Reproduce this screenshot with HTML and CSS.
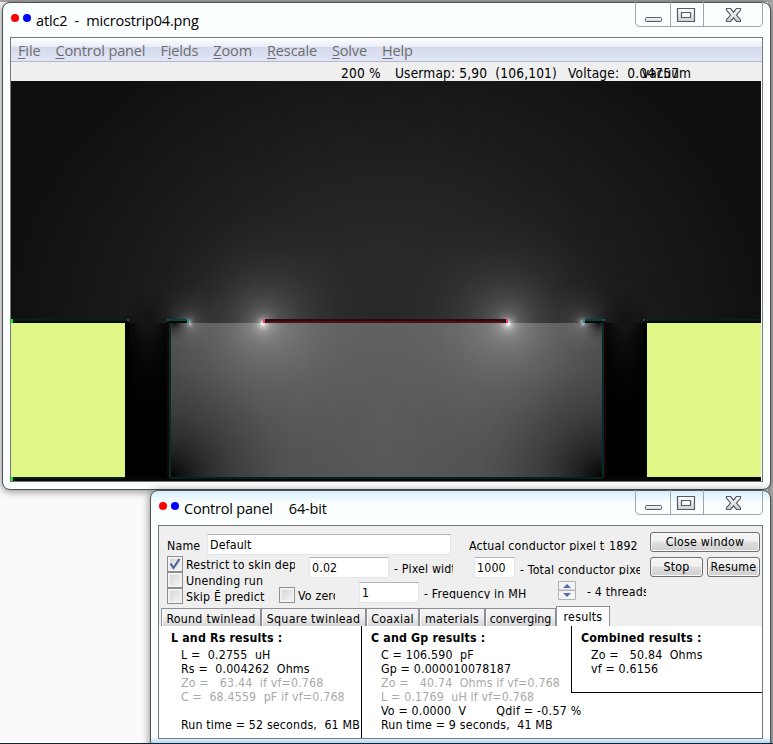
FILE: index.html
```html
<!DOCTYPE html>
<html lang="en">
<head>
<meta charset="utf-8">
<title>atlc2</title>
<link rel="stylesheet" href="styles.css">
</head>
<body>
<svg class="defs" width="0" height="0">
  <defs>
    <linearGradient id="metal" x1="0" y1="0" x2="0" y2="1"><stop offset="0" stop-color="#fff"/><stop offset="1" stop-color="#cfcfd2"/></linearGradient>
    <symbol id="caption" viewBox="0 0 128 25">
      <path d="M.5 0V20Q.5 24.500 5 24.500H123Q127.500 24.500 127.500 20V0M35.500 0V24M68.500 0V24" fill="none" stroke="#a2a5a8"/>
      <rect x="10.500" y="15.500" width="16" height="4" rx="1" fill="url(#metal)" stroke="#565a69"/>
      <path fill-rule="evenodd" d="M42.500 6.500h17v13h-17zM46.500 10.500v5h9v-5z" fill="url(#metal)" stroke="#565a69" stroke-width="1.200"/>
      <path d="M91.500 6.500h4l3 3.700 3-3.700h4v1.500l-4 5 4 5v1.500h-4l-3-3.700-3 3.700h-4v-1.500l4-5-4-5z" fill="url(#metal)" stroke="#565a69" stroke-width="1.200"/>
    </symbol>
  </defs>
</svg>

<section class="window main">
  <header class="titlebar">
    <i class="dot red"></i><i class="dot blue"></i>
    <h1 class="title"><span class="t-app">atlc2  -  microstrip04.png</span></h1>
    <svg class="caption" width="128" height="25"><use href="#caption"/></svg>
  </header>
  <div class="frame">
    <nav class="menu">
      <span><u>F</u>ile</span><span><u>C</u>ontrol panel</span><span>F<u>i</u>elds</span><span><u>Z</u>oom</span><span><u>R</u>escale</span><span><u>S</u>olve</span><span><u>H</u>elp</span>
    </nav>
    <div class="status"><span class="s-zoom">200 %</span><span class="s-map">Usermap: 5,90  (106,101)</span><span class="s-volt">Voltage:  0.04757</span><span class="s-mat">vacuum</span></div>
    <svg class="field" width="750" height="400" viewBox="0 0 750 400">
      <defs>
        <radialGradient id="air" gradientUnits="userSpaceOnUse" cx="375" cy="250" r="390" gradientTransform="translate(375 250) scale(1 .86) translate(-375 -250)">
          <stop offset="0" stop-color="#282828"/><stop offset=".25" stop-color="#282828"/><stop offset=".5" stop-color="#202020"/><stop offset=".75" stop-color="#171717"/><stop offset="1" stop-color="#0f0f0f"/>
        </radialGradient>
        <radialGradient id="glow"><stop offset="0" stop-color="#fff" stop-opacity=".95"/><stop offset=".03" stop-color="#fff" stop-opacity=".55"/><stop offset=".06" stop-color="#fff" stop-opacity=".36"/><stop offset=".1" stop-color="#fff" stop-opacity=".26"/><stop offset=".16" stop-color="#fff" stop-opacity=".19"/><stop offset=".25" stop-color="#fff" stop-opacity=".135"/><stop offset=".37" stop-color="#fff" stop-opacity=".085"/><stop offset=".52" stop-color="#fff" stop-opacity=".045"/><stop offset=".72" stop-color="#fff" stop-opacity=".017"/><stop offset="1" stop-color="#fff" stop-opacity="0"/></radialGradient>
        <radialGradient id="spark"><stop offset="0" stop-color="#fff" stop-opacity=".65"/><stop offset=".08" stop-color="#fff" stop-opacity=".26"/><stop offset=".18" stop-color="#fff" stop-opacity=".13"/><stop offset=".35" stop-color="#fff" stop-opacity=".065"/><stop offset=".6" stop-color="#fff" stop-opacity=".022"/><stop offset="1" stop-color="#fff" stop-opacity="0"/></radialGradient>
        <linearGradient id="sub" x1="0" y1="0" x2="0" y2="1"><stop offset="0" stop-color="#606060"/><stop offset="1" stop-color="#575757"/></linearGradient>
        <linearGradient id="sides"><stop offset="0" stop-opacity=".2"/><stop offset=".3" stop-opacity=".05"/><stop offset=".5" stop-opacity="0"/><stop offset=".7" stop-opacity=".05"/><stop offset="1" stop-opacity=".2"/></linearGradient>
        <radialGradient id="shade"><stop offset="0" stop-opacity=".95"/><stop offset=".07" stop-opacity=".78"/><stop offset=".18" stop-opacity=".57"/><stop offset=".32" stop-opacity=".37"/><stop offset=".5" stop-opacity=".2"/><stop offset=".7" stop-opacity=".09"/><stop offset=".87" stop-opacity=".02"/><stop offset="1" stop-opacity="0"/></radialGradient>
        <radialGradient id="dusk"><stop offset="0" stop-opacity=".4"/><stop offset=".4" stop-opacity=".25"/><stop offset="1" stop-opacity="0"/></radialGradient>
        <linearGradient id="trench" x1="0" y1="0" x2="0" y2="1"><stop offset="0" stop-color="#161616"/><stop offset=".12" stop-color="#0d0d0d"/><stop offset=".3" stop-color="#050505"/><stop offset=".55" stop-color="#000"/></linearGradient>
        <linearGradient id="walls"><stop offset="0" stop-opacity=".7"/><stop offset=".25" stop-opacity=".2"/><stop offset=".5" stop-opacity="0"/><stop offset=".75" stop-opacity=".2"/><stop offset="1" stop-opacity=".7"/></linearGradient>
        <clipPath id="above"><path d="M0 0H750V242H0z"/></clipPath>
        <clipPath id="board"><path d="M160 242H591V396H160z"/></clipPath>
      </defs>
      <rect width="750" height="400"/>
      <rect width="750" height="242" fill="url(#air)"/>
      <g clip-path="url(#above)">
        <circle cx="252" cy="242" r="110" fill="url(#glow)"/><circle cx="497" cy="242" r="110" fill="url(#glow)"/>
        <circle cx="178" cy="241" r="40" fill="url(#spark)"/><circle cx="571" cy="241" r="40" fill="url(#spark)"/>
        <ellipse cx="137" cy="248" rx="30" ry="38" fill="url(#dusk)"/><ellipse cx="613" cy="248" rx="30" ry="38" fill="url(#dusk)"/>
      </g>
      <path d="M118 242H156V396H118zM595 242H632V396H595z" fill="url(#trench)"/>
      <rect x="118" y="242" width="38" height="154" fill="url(#walls)"/><rect x="595" y="242" width="37" height="154" fill="url(#walls)"/>
      <rect x="160" y="242" width="431" height="154" fill="url(#sub)"/>
      <rect x="160" y="242" width="431" height="154" fill="url(#sides)"/>
      <g clip-path="url(#board)">
        <circle cx="252" cy="243" r="135" fill="url(#glow)"/><circle cx="497" cy="243" r="135" fill="url(#glow)"/>
        <circle cx="160" cy="396" r="125" fill="url(#shade)"/><circle cx="591" cy="396" r="125" fill="url(#shade)"/>
        <circle cx="164" cy="242" r="20" fill="url(#shade)"/><circle cx="587" cy="242" r="20" fill="url(#shade)"/>
        <circle cx="179" cy="243" r="30" fill="url(#spark)"/><circle cx="572" cy="243" r="30" fill="url(#spark)"/>
      </g>
      <path d="M0 242H114V396H0zM636 242H750V396H636z" fill="#def787"/>
      <path d="M0 240H118V242H0zM632 240H750V242H632zM158 240H176V242H158zM574 240H592V242H574zM0 396H750V400H0z" fill="#080502"/>
      <path d="M0 238H118V240H0zM632 238H750V240H632zM158 396H592V398H158zM0 396H114V398H0z" fill="#03211f"/>
      <path d="M156 238H176V240H156zM574 238H594V240H574z" fill="#004743"/>
      <path d="M158 242H160V396H158zM591 242H593V396H591z" fill="#032b29"/>
      <path d="M156 240H158V396H156zM593 240H595V396H593z" fill="#180604"/>
      <path d="M116 238H118V240H116zM632 238H634V240H632zM156 238H158V240H156zM592 238H594V240H592z" fill="#155b58"/>
      <path d="M176 238H178V242H176zM572 238H574V242H572z" fill="#159793"/>
      <path d="M0 238H2V242H0zM0 396H2V400H0z" fill="#0f0"/>
      <path d="M254 238H496V240H254z" fill="#2c0b10"/><path d="M254 240H496V242H254z" fill="#50101a"/>
      <path d="M252 238H254V242H252zM495 238H497V242H495z" fill="#ff4145"/>
      <path d="M254 238H256V242H254zM493 238H495V242H493z" fill="#34053c"/>
      <path d="M250 242H252V244H250zM497 242H499V244H497z" fill="#fff"/>
    </svg>
  </div>
</section>

<section class="window control">
  <header class="titlebar">
    <i class="dot red"></i><i class="dot blue"></i>
    <h1 class="title"><span class="t-panel">Control panel</span><span class="t-bit">64-bit</span></h1>
    <svg class="caption" width="128" height="25"><use href="#caption"/></svg>
  </header>
  <div class="frame panel">
    <div class="settings">
      <div class="form">
        <div class="name-row">
          <span class="lb-name">Name</span><span class="input in-name">Default</span>
          <span class="clip lb-actual">Actual conductor pixel total</span><span class="lb-count">1892</span>
        </div>
        <div class="options">
          <div class="checks">
            <div class="check"><i class="box"><svg width="12" height="12"><path d="M1.500 5.500L4.500 10 10.500 1" fill="none" stroke="#4a5f97" stroke-width="2"/></svg></i><span class="lb-skin">Restrict to skin depth</span></div>
            <div class="check"><i class="box"></i><span class="lb-unend">Unending run</span></div>
            <div class="check"><i class="box"></i><span class="lb-skip">Skip Ē predict</span></div>
          </div>
          <div class="values">
            <div class="row-a"><span class="input in-width">0.02</span><span class="clip lb-width">- Pixel width</span><span class="input in-total">1000</span><span class="clip lb-total">- Total conductor pixels</span></div>
            <div class="row-b"><i class="box vo-box"></i><span class="lb-vo">Vo zero</span><span class="input in-freq">1</span><span class="clip lb-freq">- Frequency in MHz</span>
              <svg class="spinner" width="18" height="19"><path d="M.5.500h17v8.500H.500zM.5 9.500h17v9H.500z" fill="#f3f3f3" stroke="#b0b2b5"/><path d="M5 7l4-4 4 4zM5 12h8l-4 4z" fill="#5369b0"/></svg>
              <span class="lb-thr">- 4 threads</span></div>
          </div>
        </div>
      </div>
      <div class="actions"><button class="wide"><span>Close window</span></button><button><span>Stop</span></button><button><span>Resume</span></button></div>
    </div>
    <div class="tabs"><span class="tab w1">Round twinlead</span><span class="tab w2">Square twinlead</span><span class="tab w3">Coaxial</span><span class="tab w4">materials</span><span class="tab w5">converging</span><span class="tab w6 active">results</span></div>
    <div class="results">
      <div class="col c1">
        <h2>L and Rs results :</h2>
        <p>L =  0.2755  uH</p><p>Rs =  0.004262  Ohms</p><p class="dim">Zo =   63.44  if vf=0.768</p><p class="dim">C =  68.4559  pF if vf=0.768</p><p> </p><p>Run time = 52 seconds,  61 MB</p>
      </div>
      <div class="col c2">
        <h2>C and Gp results :</h2>
        <p>C = 106.590  pF</p><p>Gp = 0.000010078187</p><p class="dim">Zo =   40.74  Ohms if vf=0.768</p><p class="dim">L = 0.1769  uH if vf=0.768</p><p>Vo = 0.0000  V<span class="qdif">Qdif = -0.57 %</span></p><p>Run time = 9 seconds,  41 MB</p>
      </div>
      <div class="col c3">
        <h2>Combined results :</h2>
        <p>Zo =   50.84  Ohms</p><p>vf = 0.6156</p>
      </div>
    </div>
  </div>
</section>
</body>
</html>
```
FILE: styles.css
```css
* { box-sizing: border-box; }
body {
  margin: 0; width: 773px; height: 744px; overflow: hidden; position: relative;
  background: linear-gradient(#a9a9a9 0 2px, transparent 2px), linear-gradient(90deg, #fafafa 0 768px, #b8b8b8 768px);
  font: 12.3px/14px "DejaVu Sans Condensed", "DejaVu Sans", sans-serif; font-stretch: condensed; color: #000;
  letter-spacing: .17px;
}
body::after { content: ""; position: absolute; left: 0; right: 0; top: 743px; height: 1px; background: #18222d; }
.defs { position: absolute; }
h1, h2, p { margin: 0; font-weight: normal; }
span, p, h2 { white-space: pre; }

.window { position: absolute; border: 1.5px solid #4e5254; border-radius: 8px; background: #fbffff; box-shadow: 0 1px 8px rgba(0,0,0,.5); }
.main { left: 2px; top: 2px; width: 769px; height: 488px; padding: 0 0 0 7px; }
.control { left: 150px; top: 490px; width: 621px; height: 260px; padding: 0 0 0 7px; background: linear-gradient(#d5edfc, #fbffff 12px 246px, #b9dcf5 251px); }
.titlebar { display: flex; height: 34px; padding-left: 1px; }
.dot { width: 8px; height: 8px; border-radius: 50%; margin: 11px 4px 0 0; }
.red { background: #f00; } .blue { background: #00f; }
.title { flex: 1; font: 14.5px/36px "Open Sans", sans-serif; font-stretch: normal; padding-left: 1px; letter-spacing: -.17px; }
.t-panel { letter-spacing: -.22px; }
.t-bit { margin-left: 16px; }
.caption { margin: -1px 0 0; flex: none; margin-right: 7px; }

.frame { border: 1px solid #777; width: 753px; background: #fff; }
.menu { display: flex; height: 24px; padding-left: 7px; gap: 15px; font: 14.5px/26px "Open Sans", sans-serif; letter-spacing: -.13px; color: #6d6d6d; background: linear-gradient(#fff, #e9edf7 9px, #d4daed 9px, #e1e6f6 23px, #b4b8d0 23px); }
.menu u { text-underline-offset: 2px; text-decoration-thickness: 1px; }
.status { display: flex; height: 19px; padding-left: 330px; background: #efefef; font-size: 13.6px; line-height: 22px; overflow: hidden; }
.s-zoom { width: 54px; } .s-map { width: 173px; } .s-volt { width: 74px; } .s-mat { width: 60px; letter-spacing: 0; }
.field { display: block; }

.panel { width: 605px; height: 214px; background: #efefef; }
.settings { display: flex; height: 80px; }
.form { width: 491px; padding-top: 8px; }
.name-row { display: flex; height: 22px; padding-left: 8px; }
.input { display: block; background: #fff; border: 1px solid #e2e5ec; border-top-color: #b2b5bf; height: 21px; padding-left: 2px; line-height: 20px; flex: none; }
.clip { overflow: hidden; flex: none; }
.lb-name { width: 40px; padding-top: 5px; flex: none; }
.in-name { width: 244px; }
.lb-actual { width: 136px; margin: 5px 4px 0 18px; height: 12px; }
.lb-count { padding-top: 5px; }
.options { display: flex; }
.checks { width: 120px; padding-left: 8px; flex: none; }
.check { display: flex; height: 16px; line-height: 18px; }
.box { display: block; width: 16px; height: 16px; border: 1px solid #8e8f8f; outline: 1px solid #f4f4f4; outline-offset: -2px; background: linear-gradient(135deg, #cfd2d5, #f6f6f6); flex: none; padding: 1px; box-shadow: inset 0 0 0 2px #eee; }
.box svg { display: block; }
.check span { margin-left: 3px; flex: none; overflow: hidden; }
.lb-skin { width: 109px; }
.row-a, .row-b { display: flex; }
.row-a { padding: 1px 0 0 30px; height: 26px; }
.in-width { width: 80px; }
.lb-width { width: 59px; margin: 5px 21px 0 5px; }
.in-total { width: 41px; }
.lb-total { width: 120px; height: 12px; margin: 6px 0 0 5px; }
.vo-box { margin-top: 5px; }
.lb-vo { width: 37px; margin: 7px 24px 0 3px; overflow: hidden; flex: none; }
.in-freq { width: 60px; }
.lb-freq { width: 102px; height: 12px; margin: 5px 32px 0 5px; }
.spinner { flex: none; margin-top: -1px; }
.lb-thr { width: 59px; margin: 3px 0 0 11px; overflow: hidden; flex: none; }
.actions { display: flex; flex-wrap: wrap; gap: 5px 4px; padding-top: 6px; width: 110px; align-content: flex-start; }
button { width: 53px; height: 20px; padding: 1px 0 0; border: 1px solid #707070; border-radius: 3px; background: linear-gradient(#f3f3f3 45%, #dedede 50%, #cfcfcf); box-shadow: inset 0 0 0 1px #fafafa; font: inherit; letter-spacing: .25px; line-height: 17px; white-space: nowrap; }
.wide { width: 110px; }

.tabs { display: flex; height: 20px; align-items: flex-end; padding-left: 2px; }
.tab { height: 18px; border: solid #8e9097; border-width: 1px 1px 0; background: linear-gradient(#f2f2f2 40%, #d5d5d5); text-align: center; line-height: 20px; letter-spacing: .25px; overflow: hidden; flex: none; box-shadow: inset 1px 0 #fff; }
.w1 { width: 100px; } .w2 { width: 105px; } .w3 { width: 53px; } .w4 { width: 66px; } .w5 { width: 71px; letter-spacing: 0; } .w6 { width: 54px; }
.active { height: 20px; background: #fff; border-width: 1px 1px 0; line-height: 20px; }
.results { display: flex; height: 112px; background: #fff; }
.col { padding: 5px 0 0 9px; flex: none; }
.col h2 { font-size: 12.3px; font-weight: bold; margin-bottom: 3px; }
.col p { height: 14px; padding-left: 10px; }
.dim { color: #a9a9a9; }
.c1 { width: 203px; border-right: 1px solid #000; padding-left: 12px; }
.c2 { width: 209px; }
.c3 { width: 191px; height: 67px; border-left: 1px solid #000; border-bottom: 1px solid #000; }
.qdif { margin-left: 30px; letter-spacing: .25px; }
```
